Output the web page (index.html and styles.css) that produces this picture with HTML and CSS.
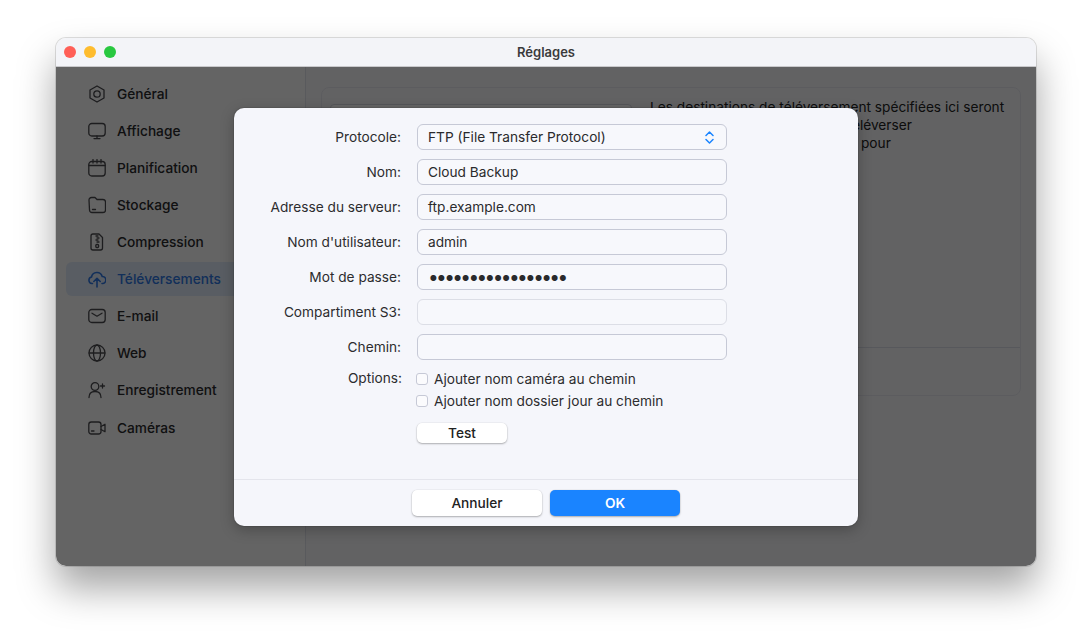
FILE: index.html
```html
<!DOCTYPE html>
<html lang="fr">
<head>
<meta charset="UTF-8" />
<title>Réglages</title>
<link rel="stylesheet" href="styles.css">
</head>
<body>
<div class="window">
  <div class="titlebar">
    <div class="lights">
      <span class="light red"></span>
      <span class="light yellow"></span>
      <span class="light green"></span>
    </div>
    <div class="title">Réglages</div>
  </div>

  <div class="content">
    <ul class="sidebar">
      <li class="item">
        <svg class="icon" viewBox="0 0 18 18"><path d="M9 1l7 4v8l-7 4-7-4V5z"/><circle cx="9" cy="9" r="3.2"/></svg>
        <span>Général</span>
      </li>
      <li class="item">
        <svg class="icon" viewBox="0 0 18 18"><rect x="0.8" y="1.5" width="16.4" height="12.5" rx="3"/><path d="M9 14v2.5M6 16.6h6"/></svg>
        <span>Affichage</span>
      </li>
      <li class="item">
        <svg class="icon" viewBox="0 0 18 18"><rect x="0.8" y="2.5" width="16.4" height="14.5" rx="3"/><path d="M1 6.5h16M5 0.5v3.500M9 0.5v3.500M13 0.5v3.500"/></svg>
        <span>Planification</span>
      </li>
      <li class="item">
        <svg class="icon" viewBox="0 0 18 18"><path d="M1 4a2.500 2.500 0 0 1 2.500-2.500h3.500l2 2h6a2.500 2.500 0 0 1 2.500 2.500v8a2.500 2.500 0 0 1-2.500 2.500h-11a2.500 2.500 0 0 1-2.500-2.500z"/><path d="M4.500 13.500h3"/></svg>
        <span>Stockage</span>
      </li>
      <li class="item">
        <svg class="icon" viewBox="0 0 18 18"><path d="M5 1h6l3.500 3.500v10.500a2 2 0 0 1-2 2h-7.500a2 2 0 0 1-2-2v-12a2 2 0 0 1 2-2z"/><path d="M8 3h2M9 5h2M8 7h2M9 9h2"/><rect x="7.800" y="11.500" width="2.800" height="3" rx="1"/></svg>
        <span>Compression</span>
      </li>
      <li class="item active">
        <svg class="icon" viewBox="0 0 18 18"><path d="M4.500 13.500h-0.500a3.300 3.300 0 0 1-0.500-6.500 5.500 5.500 0 0 1 10.700-0.500 3.500 3.500 0 0 1 0.300 7h-0.500"/><path d="M9 17v-8.500M5.800 11.500l3.200-3.200 3.200 3.200"/></svg>
        <span>Téléversements</span>
      </li>
      <li class="item">
        <svg class="icon" viewBox="0 0 18 18"><rect x="0.800" y="2.500" width="16.400" height="13" rx="3"/><path d="M4 6.200l5 3 5-3"/></svg>
        <span>E-mail</span>
      </li>
      <li class="item">
        <svg class="icon" viewBox="0 0 18 18"><circle cx="9" cy="9" r="8"/><ellipse cx="9" cy="9" rx="3.500" ry="8"/><path d="M1.200 9h15.600"/></svg>
        <span>Web</span>
      </li>
      <li class="item">
        <svg class="icon" viewBox="0 0 18 18"><circle cx="7" cy="5.500" r="3.800"/><path d="M1 16.500c0-3.800 2.500-6 6-6s6 2.200 6 6"/><path d="M14.500 3v4M12.500 5h4"/></svg>
        <span>Enregistrement</span>
      </li>
      <li class="item">
        <svg class="icon" viewBox="0 0 18 18"><rect x="0.800" y="3" width="12.200" height="12" rx="2.500"/><path d="M13 7.500l4-2.200v7.400l-4-2.200M3.500 12h2.500"/></svg>
        <span>Caméras</span>
      </li>
    </ul>

    <div class="main">
      <div class="card">
        <div class="card-body">
          <div class="list-box"></div>
          <p class="intro">Les destinations de téléversement spécifiées ici seront<br>utilisées par les caméras pour téléverser<br>les images et vidéos des alertes pour</p>
        </div>
        <div class="card-foot"></div>
      </div>
    </div>

    <div class="scrim"></div>
  </div>

  <div class="dialog">
    <div class="form">
      <label>Protocole:</label>
      <div class="field select">
        <span>FTP (File Transfer Protocol)</span>
        <svg class="updown" viewBox="0 0 9 13"><path d="M1 4.500L4.500 1 8 4.500M1 8.500L4.500 12 8 8.500"/></svg>
      </div>
      <label>Nom:</label>
      <div class="field">Cloud Backup</div>
      <label>Adresse du serveur:</label>
      <div class="field">ftp.example.com</div>
      <label>Nom d'utilisateur:</label>
      <div class="field">admin</div>
      <label>Mot de passe:</label>
      <div class="field password">•••••••••••••••••</div>
      <label>Compartiment S3:</label>
      <div class="field disabled"></div>
      <label>Chemin:</label>
      <div class="field"></div>
      <label class="options-label">Options:</label>
      <div class="options">
        <div class="check"><span class="box"></span>Ajouter nom caméra au chemin</div>
        <div class="check"><span class="box"></span>Ajouter nom dossier jour au chemin</div>
        <button class="btn test">Test</button>
      </div>
    </div>
    <div class="dialog-foot">
      <button class="btn big">Annuler</button>
      <button class="btn big primary">OK</button>
    </div>
  </div>
</div>
</body>
</html>
```

FILE: styles.css
```css
* {
  box-sizing: border-box;
}
html, body {
  height: 100%;
}
body {
  margin: 0;
  padding: 38px 56px 74px;
  background: #fff;
  color: #222;
  font-family: Inter, "Noto Sans", sans-serif;
  font-size: 13.7px;
  overflow: hidden;
}
.window {
  position: relative;
  display: flex;
  flex-direction: column;
  height: 528px;
  border-radius: 10px;
  box-shadow: 0 0 0 1px rgba(0, 0, 0, 0.12), 0 22px 38px rgba(0, 0, 0, 0.36);
}

/* title bar */
.titlebar {
  display: flex;
  align-items: center;
  position: relative;
  height: 29px;
  flex: none;
  padding-bottom: 1px;
  background: #f3f4f8;
  border-radius: 10px 10px 0 0;
  border-bottom: 1px solid #c9c9cc;
}
.lights {
  position: absolute;
  left: 8px;
  top: 8px;
  display: flex;
  gap: 8px;
}
.light {
  width: 12px;
  height: 12px;
  border-radius: 50%;
}
.red { background: #ff5f57; }
.yellow { background: #febc2e; }
.green { background: #28c840; }
.title {
  flex: 1;
  text-align: center;
  font-size: 13px;
  font-weight: 600;
  color: #3a3a3c;
}

/* page under the dialog */
.content {
  flex: 1;
  display: flex;
  position: relative;
  min-height: 0;
  border-radius: 0 0 10px 10px;
  overflow: hidden;
  background: #f5f5f8;
}
.sidebar {
  width: 250px;
  flex: none;
  margin: 0;
  padding: 10px 10px 0;
  list-style: none;
  display: flex;
  flex-direction: column;
  gap: 3px;
  background: #f9f9f9;
  border-right: 1px solid #dfe1e8;
}
.item {
  display: flex;
  align-items: center;
  gap: 11px;
  height: 34px;
  padding-left: 22px;
  border-radius: 6px;
  font-weight: 500;
  color: #2a2a2c;
}
.item:last-child {
  margin-top: 1px;
}
.item.active {
  background: #dee8f7;
  color: #2f76e0;
}
.icon {
  width: 18px;
  height: 18px;
  flex: none;
  fill: none;
  stroke: #4a4a4e;
  stroke-width: 1.300;
  stroke-linecap: round;
  stroke-linejoin: round;
}
.active .icon {
  stroke: #2f76e0;
  stroke-width: 1.600;
}
.main {
  flex: 1;
  padding: 20px 15px;
}
.card {
  height: 309px;
  display: flex;
  flex-direction: column;
  border: 1px solid #e6e7ee;
  border-radius: 8px;
}
.card-body {
  flex: 1;
  display: flex;
  gap: 18px;
  padding: 10px 8px;
  border-bottom: 1px solid #d9dbe6;
}
.card-foot {
  height: 47px;
  flex: none;
}
.list-box {
  width: 302px;
  height: 220px;
  margin-top: 6px;
  background: #fff;
  border: 1px solid #d4d6df;
  border-radius: 4px;
}
.intro {
  margin: 0;
  line-height: 18px;
  color: #222;
  white-space: nowrap;
}
.scrim {
  position: absolute;
  inset: 0;
  background: rgba(0, 0, 0, 0.6);
}

/* dialog */
.dialog {
  position: absolute;
  left: 178px;
  top: 70px;
  width: 624px;
  height: 418px;
  display: flex;
  flex-direction: column;
  background: #f5f6fb;
  border-radius: 10px;
  box-shadow: 0 0 0 1px rgba(0, 0, 0, 0.08), 0 4px 14px rgba(0, 0, 0, 0.25);
}
.form {
  flex: 1;
  display: grid;
  grid-template-columns: 167px 310px;
  grid-auto-rows: 26px;
  column-gap: 16px;
  row-gap: 9px;
  padding-top: 16px;
}
.form label {
  align-self: center;
  text-align: right;
  color: #2c2c2e;
}
.field {
  display: flex;
  align-items: center;
  justify-content: space-between;
  padding: 0 10px;
  background: #f7f8fc;
  border: 1px solid #c6c9d6;
  border-radius: 6px;
  color: #2a2a2c;
}
.field.disabled {
  border-color: #dcdee6;
}
.password {
  font-size: 19px;
  letter-spacing: -2.600px;
}
.updown {
  width: 9px;
  height: 13px;
  margin-right: 2px;
  fill: none;
  stroke: #1a84ff;
  stroke-width: 1.500;
  stroke-linecap: round;
  stroke-linejoin: round;
}
.options-label {
  align-self: start !important;
  margin-top: 1px;
  margin-right: -1px;
}
.options {
  display: flex;
  flex-direction: column;
  align-items: flex-start;
  margin-top: -1px;
  height: 120px;
}
.check {
  display: flex;
  align-items: center;
  gap: 6px;
  height: 22px;
  margin-left: -1px;
  color: #2c2c2e;
}
.box {
  width: 12px;
  height: 12px;
  background: #fbfbfd;
  border: 1px solid #c6c9d6;
  border-radius: 3px;
}
.btn {
  border: 0;
  border-radius: 5px;
  background: #fff;
  color: #222;
  font-family: inherit;
  font-size: 13.7px;
  font-weight: 500;
  padding: 0;
  box-shadow: 0 1px 2px rgba(0, 0, 0, 0.28), 0 0 0 0.500px rgba(0, 0, 0, 0.06);
}
.test {
  width: 90px;
  height: 20px;
  margin-top: 11px;
}
.dialog-foot {
  flex: none;
  height: 47px;
  display: flex;
  justify-content: center;
  align-items: flex-start;
  gap: 8px;
  padding-top: 10px;
  border-top: 1px solid #e4e5ec;
}
.big {
  width: 130px;
  height: 26px;
}
.primary {
  background: #1a84ff;
  color: #fff;
  font-weight: 600;
}
```
